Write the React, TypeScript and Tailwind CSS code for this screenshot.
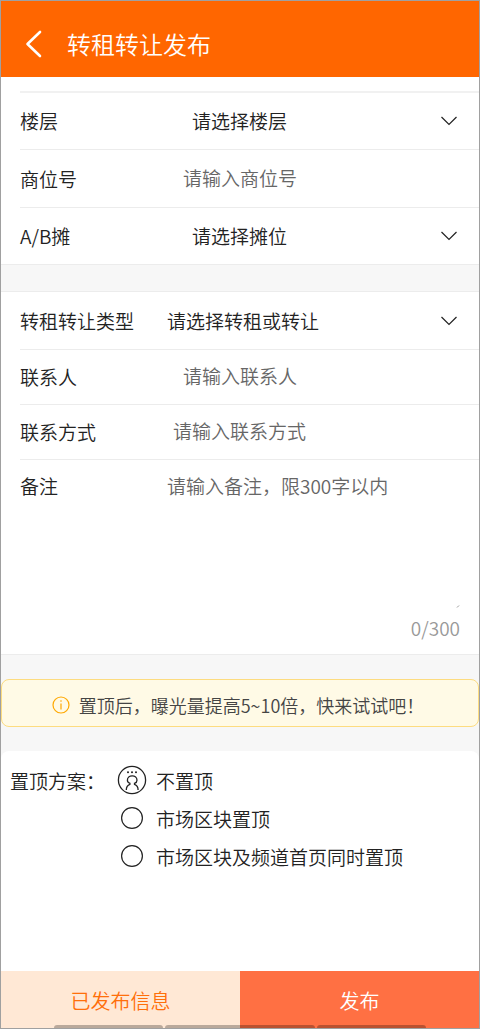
import { useState, type ReactNode } from 'react'

const plans = ['不置顶', '市场区块置顶', '市场区块及频道首页同时置顶']

function Row({ id, label, children, className = '' }: { id: string; label: string; children: ReactNode; className?: string }) {
  return (
    <div className={`ml-[19px] flex items-center pr-5 ${className}`}>
      <label htmlFor={id} className="w-[147px] shrink-0 whitespace-nowrap">
        {label}
      </label>
      {children}
    </div>
  )
}

function Select({ id, placeholder, className = '' }: { id: string; placeholder: string; className?: string }) {
  return (
    <div className="flex min-w-0 flex-1 items-center">
      <select id={id} className={`min-w-0 flex-1 appearance-none bg-transparent outline-none ${className}`}>
        <option>{placeholder}</option>
      </select>
      <svg className="pointer-events-none mr-0.5 h-2.5 w-4 shrink-0" viewBox="0 0 16 10" fill="none" stroke="#222" strokeWidth="1.2">
        <path d="M0.5 1L8 8.5L15.5 1" />
      </svg>
    </div>
  )
}

function PlanIcon({ checked }: { checked: boolean }) {
  if (!checked) {
    return (
      <svg className="h-6 w-6" viewBox="0 0 24 24" fill="none" stroke="#222" strokeWidth="1.2">
        <circle cx="12" cy="12" r="10.4" />
      </svg>
    )
  }
  return (
    <svg className="h-[30px] w-[30px]" viewBox="0 0 30 30" fill="none" stroke="#222" strokeWidth="1.3">
      <circle cx="15" cy="15" r="13.6" />
      <path d="M9.300 25c0-3 1-4.800 3.600-5.700v-1C11.200 17.700 10.400 16.500 10.400 15.200a4.800 4.400 0 0 1 9.600 0c0 1.300-.8 2.500-2.500 3.100v1c2.600.9 3.600 2.700 3.600 5.700" />
      <g fill="#222" stroke="none">
        <circle cx="11" cy="7.2" r="1" />
        <circle cx="15" cy="7.2" r="1" />
        <circle cx="19" cy="7.2" r="1" />
      </g>
    </svg>
  )
}

export default function App() {
  const [plan, setPlan] = useState(plans[0])
  const [remark, setRemark] = useState('')

  return (
    <div className="flex min-h-screen flex-col border border-[#a0a0a0] bg-white font-['Noto_Sans_CJK_SC',sans-serif] text-[19px] leading-7 font-[350] text-[#222]">
      <header className="flex h-[76px] items-center bg-[#ff6600] pt-2.5 pl-6 text-white">
        <button aria-label="返回" className="mr-6 cursor-pointer">
          <svg className="h-7 w-[18px]" viewBox="0 0 18 28" fill="none" stroke="currentColor" strokeWidth="2.6" strokeLinecap="round" strokeLinejoin="round">
            <path d="M15 2L2.500 14L15 26" />
          </svg>
        </button>
        <h1 className="text-2xl font-[350]">转租转让发布</h1>
      </header>

      <section className="border-b border-[#ececec] pt-3.5">
        <Row id="floor" label="楼层" className="h-[58px] border-t-2 border-[#f1f1f1]">
          <Select id="floor" placeholder="请选择楼层" className="pl-[25px]" />
        </Row>
        <Row id="booth" label="商位号" className="h-[58px] border-t border-[#ececec]">
          <input id="booth" placeholder="请输入商位号" className="min-w-0 flex-1 bg-transparent pb-0.5 pl-4 outline-none placeholder:text-[#666]" />
        </Row>
        <Row id="side" label="A/B摊" className="h-[57px] border-t border-[#ececec]">
          <Select id="side" placeholder="请选择摊位" className="pl-[25px]" />
        </Row>
      </section>

      <div className="h-[26px] bg-[#f7f7f7]" />

      <section className="border-y border-[#ececec]">
        <Row id="type" label="转租转让类型" className="h-[57px]">
          <Select id="type" placeholder="请选择转租或转让" />
        </Row>
        <Row id="contact" label="联系人" className="h-[55px] border-t border-[#ececec]">
          <input id="contact" placeholder="请输入联系人" className="min-w-0 flex-1 bg-transparent pb-0.5 pl-4 outline-none placeholder:text-[#666]" />
        </Row>
        <Row id="phone" label="联系方式" className="h-[55px] border-t border-[#ececec]">
          <input id="phone" placeholder="请输入联系方式" className="min-w-0 flex-1 bg-transparent pb-0.5 pl-1.5 outline-none placeholder:text-[#666]" />
        </Row>
        <div className="ml-[19px] border-t border-[#ececec] pt-3 pr-[19px]">
          <div className="flex">
            <label htmlFor="remark" className="w-[147px] shrink-0">
              备注
            </label>
            <textarea
              id="remark"
              maxLength={300}
              value={remark}
              onChange={(e) => setRemark(e.target.value)}
              placeholder="请输入备注，限300字以内"
              className="h-[128px] min-w-0 flex-1 resize-none bg-transparent outline-none placeholder:text-[#666]"
            />
          </div>
          <svg className="mt-1 ml-auto h-1 w-1" viewBox="0 0 4 4" fill="none" stroke="#999">
            <path d="M1 3.500L3 1.500" />
          </svg>
          <div className="pt-1.5 pb-3 text-right text-[#999]">{remark.length}/300</div>
        </div>
      </section>

      <div className="bg-[#f7f7f7] pt-6">
        <div className="flex h-12 items-center justify-center gap-[9px] rounded-lg border border-[#fddc80] bg-[#fffae6] pt-1 pr-1 text-lg text-[#444]">
          <svg className="h-[18px] w-[18px]" viewBox="0 0 18 18" fill="none" stroke="#ffa800" strokeWidth="1.2">
            <circle cx="9" cy="9" r="8" />
            <path d="M9 7.500v6M9 4.200v1.500" />
          </svg>
          <p>置顶后，曝光量提高5~10倍，快来试试吧！</p>
        </div>
        <div className="h-6" />
        <div role="radiogroup" aria-labelledby="plan-title" className="flex rounded-t-lg bg-white pt-3.5 pl-[9px]">
          <span id="plan-title" className="w-[107px] shrink-0 pt-0.5">
            置顶方案：
          </span>
          <div>
            {plans.map((name) => (
              <label key={name} className="flex h-[38px] cursor-pointer items-start gap-[9px]">
                <input type="radio" name="plan" checked={plan === name} onChange={() => setPlan(name)} className="sr-only" />
                <span className="flex h-[30px] w-[30px] items-center justify-center">
                  <PlanIcon checked={plan === name} />
                </span>
                <span className="pt-0.5">{name}</span>
              </label>
            ))}
          </div>
        </div>
      </div>

      <footer className="relative mt-auto flex h-[57px] text-xl">
        <button className="flex-1 cursor-pointer bg-[#ffe8d5] pt-0.5 text-[#ff6f0a]">已发布信息</button>
        <button className="flex-1 cursor-pointer bg-[#ff7043] pt-0.5 text-white">发布</button>
        <div className="pointer-events-none absolute inset-x-0 bottom-0 flex gap-0.5 px-[53px]">
          <span className="h-[3px] flex-[109] rounded-t-sm bg-black/27" />
          <span className="h-[3px] flex-[150] rounded-t-sm bg-black/27" />
          <span className="h-[3px] flex-[109] rounded-t-sm bg-black/27" />
        </div>
      </footer>
    </div>
  )
}
